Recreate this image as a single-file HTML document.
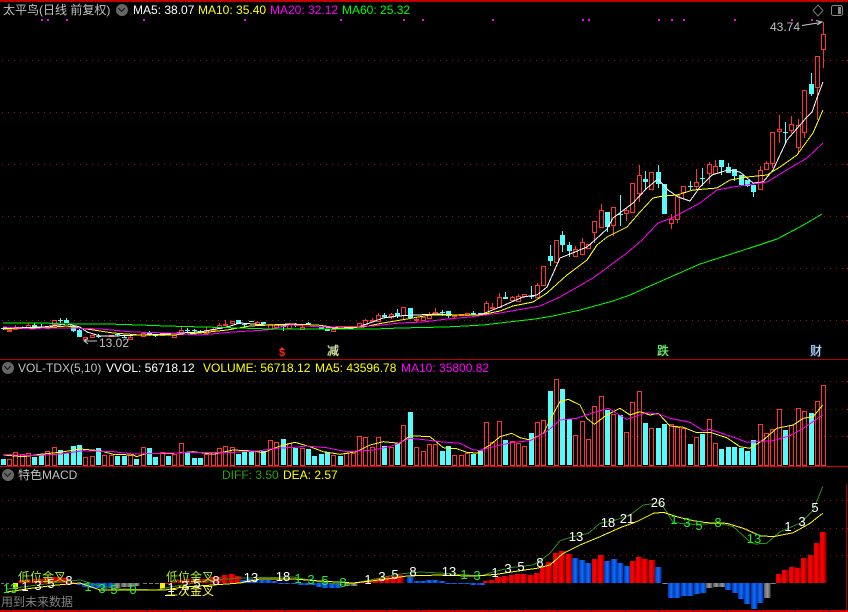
<!DOCTYPE html>
<html lang="zh">
<head>
<meta charset="utf-8">
<title>太平鸟</title>
<style>
html,body{margin:0;padding:0;background:#000;width:848px;height:612px;overflow:hidden}
#w{position:relative;width:848px;height:612px;background:#000;overflow:hidden;font-family:"Liberation Sans","WenQuanYi Zen Hei","Noto Sans CJK SC",sans-serif;font-size:12px;line-height:14px}
#w>svg{position:absolute;left:0;top:0}
.t{position:absolute;white-space:pre}
.ic{position:absolute;width:12px;height:12px;border-radius:50%;background:#666}
.ic:after{content:"";position:absolute;left:3px;top:2px;width:4px;height:4px;border-right:1.5px solid #111;border-bottom:1.5px solid #111;transform:rotate(45deg)}
.n{position:absolute;font-size:13px;line-height:14px;width:24px;text-align:center;color:#fff}
.g{color:#22f02a}
.c{position:absolute;font-size:12px;line-height:13px;white-space:pre}
</style>
</head>
<body>
<div id="w">
<svg id="s" width="848" height="612" viewBox="0 0 848 612" xmlns="http://www.w3.org/2000/svg"></svg>

<div class="t" style="left:3px;top:3px;color:#c0c0c0">太平鸟(日线 前复权)</div>
<div class="ic" style="left:116px;top:4px"></div>
<div class="t" style="left:133px;top:3px;color:#fff">MA5: 38.07</div>
<div class="t" style="left:198px;top:3px;color:#ff0">MA10: 35.40</div>
<div class="t" style="left:270px;top:3px;color:#f0f">MA20: 32.12</div>
<div class="t" style="left:342px;top:3px;color:#0f0">MA60: 25.32</div>
<div class="t" style="left:770px;top:20px;color:#c0c0c0">43.74</div>
<div class="t" style="left:99px;top:336px;color:#c0c0c0">13.02</div>

<div class="c" style="left:279px;top:347px;color:#f22;font-weight:bold;font-size:11px">$</div>
<div class="c" style="left:327px;top:345px;color:#dcf0a8;text-shadow:0 0 1px #dcf0a8">减</div>
<div class="c" style="left:657px;top:345px;color:#70f070;text-shadow:0 0 1px #70f070">跌</div>
<div class="c" style="left:810px;top:345px;color:#c0dcff;text-shadow:0 0 1px #80b0ff">财</div>

<div class="ic" style="left:2px;top:362px"></div>
<div class="t" style="left:18px;top:361px;color:#c0c0c0">VOL-TDX(5,10)</div>
<div class="t" style="left:106px;top:361px;color:#fff">VVOL: 56718.12</div>
<div class="t" style="left:203px;top:361px;color:#ff0">VOLUME: 56718.12</div>
<div class="t" style="left:315px;top:361px;color:#ff0">MA5: 43596.78</div>
<div class="t" style="left:401px;top:361px;color:#f0f">MA10: 35800.82</div>

<div class="ic" style="left:2px;top:469px"></div>
<div class="t" style="left:18px;top:468px;color:#c0c0c0">特色MACD</div>
<div class="t" style="left:222px;top:468px;color:#2ca010">DIFF: 3.50</div>
<div class="t" style="left:283px;top:468px;color:#ff0">DEA: 2.57</div>

<div class="c" style="left:18px;top:571px;color:#a8f020">低位金叉</div>
<div class="c" style="left:166px;top:571px;color:#a8f020">低位金叉</div>
<div class="c" style="left:166px;top:585px;color:#ffff40">上次金叉</div>
<div class="c" style="left:1px;top:596px;color:#808080">用到未来数据</div>

<div class="n g" style="left:-2px;top:582px">13</div>
<div class="n" style="left:13px;top:580px">1</div>
<div class="n" style="left:26px;top:579px">3</div>
<div class="n" style="left:39px;top:577px">5</div>
<div class="n" style="left:57px;top:574px">8</div>
<div class="n g" style="left:76px;top:580px">1</div>
<div class="n g" style="left:90px;top:582px">3</div>
<div class="n g" style="left:102px;top:583px">5</div>
<div class="n g" style="left:121px;top:583px">0</div>
<div class="n" style="left:159px;top:581px">1</div>
<div class="n" style="left:173px;top:579px">3</div>
<div class="n" style="left:185px;top:577px">5</div>
<div class="n" style="left:204px;top:574px">8</div>
<div class="n" style="left:239px;top:571px">13</div>
<div class="n" style="left:271px;top:570px">18</div>
<div class="n g" style="left:286px;top:572px">1</div>
<div class="n g" style="left:299px;top:573px">3</div>
<div class="n g" style="left:313px;top:574px">5</div>
<div class="n g" style="left:331px;top:576px">8</div>
<div class="n" style="left:356px;top:573px">1</div>
<div class="n" style="left:370px;top:570px">3</div>
<div class="n" style="left:383px;top:568px">5</div>
<div class="n" style="left:401px;top:565px">8</div>
<div class="n" style="left:437px;top:565px">13</div>
<div class="n g" style="left:452px;top:568px">1</div>
<div class="n g" style="left:465px;top:569px">3</div>
<div class="n" style="left:483px;top:566px">1</div>
<div class="n" style="left:496px;top:562px">3</div>
<div class="n" style="left:509px;top:560px">5</div>
<div class="n" style="left:528px;top:556px">8</div>
<div class="n" style="left:564px;top:530px">13</div>
<div class="n" style="left:596px;top:516px">18</div>
<div class="n" style="left:615px;top:512px">21</div>
<div class="n" style="left:646px;top:496px">26</div>
<div class="n g" style="left:662px;top:513px">1</div>
<div class="n g" style="left:675px;top:516px">3</div>
<div class="n g" style="left:687px;top:519px">5</div>
<div class="n g" style="left:706px;top:516px">8</div>
<div class="n g" style="left:742px;top:532px">13</div>
<div class="n" style="left:776px;top:520px">1</div>
<div class="n" style="left:790px;top:515px">3</div>
<div class="n" style="left:803px;top:501px">5</div>
</div>

<script>
var o='';
var R='#ff3232',C='#54fcfc';
function L(x1,y1,x2,y2,c,d){o+='<line x1="'+x1+'" y1="'+y1+'" x2="'+x2+'" y2="'+y2+'" stroke="'+c+'"'+(d?' stroke-dasharray="'+d+'"':'')+'/>';}
function rect(x,y,w,h,f,s){o+='<rect x="'+x+'" y="'+y+'" width="'+w+'" height="'+h+'" fill="'+f+'"'+(s?' stroke="'+s+'"':'')+'/>';}
function PL(p,c,w){o+='<polyline fill="none" stroke="'+c+'" stroke-width="'+(w||1)+'" points="'+p+'"/>';}
function conv(a,x0,y0){var r=[];for(var i=0;i<a.length;i+=2){r.push((x0+a[i]/3).toFixed(1)+','+(y0+a[i+1]/3).toFixed(1));}return r.join(' ');}

o+='<defs>'+
'<linearGradient id="gr"><stop offset="0" stop-color="#e00000"/><stop offset=".45" stop-color="#ff0000"/><stop offset="1" stop-color="#800000"/></linearGradient>'+
'<linearGradient id="gb"><stop offset="0" stop-color="#0038b0"/><stop offset=".5" stop-color="#1070ff"/><stop offset="1" stop-color="#0030a0"/></linearGradient>'+
'<linearGradient id="gg"><stop offset="0" stop-color="#555"/><stop offset=".5" stop-color="#999"/><stop offset="1" stop-color="#555"/></linearGradient>'+
'</defs><g shape-rendering="crispEdges">';

/* frame */
rect(0,0,848,2,'#c00000');
rect(0,359,848,1,'#b00000');
rect(0,466,848,1,'#d00000');
rect(0,610,848,2,'#d00000');
rect(846,484,1,126,'#a00000');
[60,112,164,216,268,320,381,409,436,500,528,555].forEach(function(y){
  L(2,y+.5,846,y+.5,'#a01010','1 5');
  rect(846,y,2,1,'#c00000');
});
for(var tx=11;tx<846;tx+=34.1){rect(Math.round(tx),610,1,2,'#333');}

/* magenta markers */
[41,47,66,143,244,340,403,422,492,582,588,658,671,683,734,791,811].forEach(function(x){rect(x,19,2,2,'#ff00ff');});

/* volume */
function vol(a,x0,y0){
  for(var i=0;i<a.length;i+=3){
    var x=Math.round(x0+a[i]/3-2.5),c=a[i+1],t=Math.round(y0+a[i+2]/3);
    if(c){rect(x,t,5,465-t,C);}else{rect(x+.5,t+.5,4,465-t,'none',R);}
  }
}
vol([10,1,177,28,0,178,46,0,157,67,0,163,85,0,160,103,1,171,124,1,165,142,0,153,163,0,142,181,1,150,199,1,158,220,1,138,238,1,135,256,0,172,277,0,168,295,1,144,313,0,165,334,0,165,352,1,167,373,1,167,391,0,165,409,1,177,430,0,142,448,1,144,466,1,171,487,0,155,505,1,167,523,0,162,544,0,130,562,1,157,583,1,174,601,1,174,619,0,162,640,0,157,658,0,145,676,0,138,697,0,142,715,1,162,733,1,156,754,1,153,772,0,153,790,1,153,811,0,121,829,0,127,850,1,117,868,0,130,886,1,143],0,400);
vol([37,0,145,55,1,147,73,1,168,94,1,162,112,1,157,130,0,165,151,1,168,169,0,160,190,0,160,208,0,109,226,0,112,247,0,142,265,0,112,283,1,138,304,0,142,322,1,130,340,0,76,361,1,36,379,0,142,400,0,154,418,0,133,436,0,133,457,1,153,475,1,138,493,0,166,514,0,166,532,0,160,550,1,162,571,1,153],290,400);
vol([19,0,157,37,0,217,58,0,154,76,1,210,97,0,214,115,0,219,133,0,229,154,1,189,172,0,157,190,0,151,211,1,63,229,0,28,247,1,57,268,1,147,286,0,196,307,0,154,325,0,208,343,0,109,364,0,79,382,1,120,400,0,133,421,1,135,439,0,187,457,0,97,478,0,64,496,1,159,514,0,175,535,1,174,553,1,162,574,0,163,592,0,172,610,0,175,631,1,222,649,0,202,667,1,193,688,0,148,706,0,220,724,1,237,745,1,231,763,1,231,784,1,233,802,1,243,820,1,211,841,0,163,859,0,190,877,0,178,898,0,118,916,1,180,934,0,166,955,0,115,973,0,124,994,1,129,1012,0,94,1030,0,46],480,370);
rect(480,451,3,14,C);

/* volume MAs */
PL(conv([10,165,70,170,120,163,180,157,240,147,300,152,340,163,400,165,410,170,440,160,520,160,580,155,640,163,700,150,760,153,790,158,840,138,880,128],0,400)+' '+
 conv([15,127,60,140,100,155,150,163,200,155,240,135,280,125,330,130,360,107,420,110,460,143,500,146,530,157,570,160],290,400)+' '+
 conv([0,243,30,225,60,200,95,190,120,203,150,210,190,190,215,140,240,95,265,88,300,105,320,145,343,163,380,135,420,115,450,135,480,125,510,135,535,130,570,168,610,172,650,188,690,187,740,203,780,230,810,235,850,210,890,175,940,165,970,145,1000,140,1028,105],480,370),'#ffff00');
PL(conv([10,163,100,167,180,162,250,152,340,155,400,162,600,157,700,157,780,152,830,145,880,142],0,400)+' '+
 conv([15,142,50,138,110,143,170,155,210,153,250,150,300,140,360,115,410,120,450,125,510,130,550,150,580,152],290,400)+' '+
 conv([0,240,50,228,100,217,150,212,200,185,240,150,290,145,340,128,385,115,440,148,500,128,540,133,570,145,630,157,670,182,690,178,770,205,800,217,880,212,930,197,970,175,1028,135],480,370),'#ff00ff');

/* candles: x,cyan,high,top,bottom,low in zoom coords */
function cand(a,x0,y0){
 for(var i=0;i<a.length;i+=6){
  var x=Math.round(x0+a[i]/3),c=a[i+1],h=Math.round(y0+a[i+2]/3),t=Math.round(y0+a[i+3]/3),b=Math.round(y0+a[i+4]/3),l=Math.round(y0+a[i+5]/3);
  if(b<=t)b=t+1;
  if(c){L(x+.5,h,x+.5,l,C);rect(x-2,t,5,b-t,C);}
  else{
   if(h<t)L(x+.5,h,x+.5,t,R);
   if(l>b)L(x+.5,b,x+.5,l,R);
   rect(x-1.5,t+.5,4,Math.max(b-t,1),'none',R);
  }
 }
}
cand([10,1,80,85,87,90, 26,0,90,90,94,94, 46,0,75,83,87,90, 67,0,78,82,84,88, 85,0,70,75,82,84, 103,1,70,75,83,85, 124,1,73,80,81,85, 142,0,78,80,85,85, 163,0,61,61,72,72, 181,1,54,60,61,68, 199,1,54,61,70,70, 220,1,78,78,92,95, 238,1,88,90,110,112, 256,0,112,112,117,125, 277,0,104,106,111,115, 295,1,102,107,108,114, 334,0,104,106,108,110, 352,1,100,102,106,108, 373,1,108,110,113,115, 391,0,108,110,116,116, 430,0,96,100,108,112, 448,1,92,98,106,108, 466,1,102,106,108,110, 487,0,98,100,104,104, 505,1,100,102,104,106, 523,0,106,106,112,114, 544,0,78,90,102,102, 562,1,83,90,91,97, 583,1,86,90,93,96, 601,1,90,93,94,99, 619,0,82,90,98,98, 640,0,82,87,88,90, 658,0,70,75,83,83, 676,0,60,72,73,78, 697,0,63,63,70,70, 715,1,61,61,73,73, 733,1,68,72,73,80, 754,1,63,63,67,67, 772,0,62,66,72,72, 790,1,66,66,72,72, 811,0,72,72,86,86, 829,0,72,72,80,80, 850,1,75,78,79,92, 868,0,70,72,85,88, 886,1,68,73,74,82],0,300);
cand([37,0,108,110,117,117, 55,1,96,100,101,106, 94,1,110,112,118,118, 112,1,116,118,122,122, 130,0,118,118,122,122, 169,1,110,112,116,118, 208,0,99,99,108,108, 226,0,88,90,102,102, 247,0,85,91,93,96, 265,0,68,76,94,94, 283,1,70,76,80,85, 304,0,70,72,82,88, 322,1,57,70,78,85, 340,0,52,52,75,90, 361,1,54,54,84,84, 379,0,83,88,90,96, 400,0,80,80,90,90, 418,0,65,75,83,83, 436,0,54,65,72,75, 457,1,60,65,66,78, 475,1,64,64,78,84, 493,0,76,76,77,84, 514,0,72,73,75,75, 532,0,68,70,76,76, 550,1,64,70,75,75, 571,1,68,70,75,75],290,290);
cand([18,0,364,370,400,405, 37,0,370,380,382,382, 58,0,340,352,380,380, 76,1,337,351,356,356, 97,0,347,352,360,362, 115,0,342,347,362,367, 133,0,341,341,347,347, 154,1,319,347,349,357, 172,0,310,316,350,352, 190,0,259,259,316,316, 211,1,195,228,243,258, 229,0,181,181,245,245, 247,1,153,165,194,216, 268,1,185,196,213,232, 286,0,198,207,227,227, 307,0,174,187,221,221, 325,0,193,193,205,206, 343,0,124,124,157,188, 364,0,72,91,140,140, 382,1,97,97,140,155, 400,0,82,82,134,168],480,180);
cand([4,0,282,300,350,350, 22,1,306,306,350,350, 40,0,292,292,345,375, 61,1,255,313,316,348, 79,0,295,301,309,332, 97,0,220,220,307,307, 118,0,165,196,250,275, 136,1,183,207,216,237, 154,0,187,187,236,236, 175,1,165,186,222,233, 193,1,222,222,312,312, 214,0,313,328,338,357, 232,0,255,255,328,339, 250,0,228,228,245,268, 271,1,213,227,230,240, 289,0,178,217,227,237, 307,1,175,203,206,228, 328,0,157,163,188,222, 346,0,150,169,188,188, 364,1,150,150,170,195, 385,1,158,172,190,190, 403,1,178,178,198,212, 424,1,195,195,225,225, 442,1,210,210,228,231, 460,1,225,225,246,260, 481,0,168,180,236,239, 499,0,153,160,178,178, 517,0,67,67,158,175, 538,0,14,58,62,100, 556,1,35,66,68,100, 574,0,18,43,60,70, 595,0,27,45,112,133],600,110);
cand([1141,0,271,271,395,414, 1162,1,219,252,282,287, 1180,0,169,169,260,360, 1198,0,66,103,146,203],424,0);

/* main MAs */
PL('3,328 43,327 67,324 80,327 87,332 100,336 113,336 140,335 167,334 180,333 200,332 227,327 240,323 267,325 290,325 307,326 323,327 347,329 357,327 370,323 383,318 397,316 417,315 437,314 457,315 480,315 500,307 523,297 537,295 547,287 560,258 570,254 587,247 595,240 607,229 613,218 633,203 647,188 658,179 668,190 678,197 690,201 700,187 712,175 728,170 740,172 753,183 763,182 773,170 787,140 800,125 806,118 812,112 817,98 823,82','#ffffff');
PL('3,329 40,328 67,326 100,331 113,333 140,335 173,335 200,333 227,330 250,326 290,324 317,325 340,328 363,327 383,323 407,319 430,315 457,315 480,315 500,311 513,306 533,302 547,293 567,275 587,260 597,245 607,237 627,227 640,212 653,198 663,196 677,195 693,190 717,188 730,180 747,177 767,175 780,167 797,155 813,133 823,110','#ffff00');
PL('3,327 33,329 43,328 73,328 100,329 133,332 167,333 200,335 233,332 267,330 290,325 323,327 373,326 400,323 423,322 447,319 470,317 500,313 523,309 540,306 560,297 593,278 627,253 642,240 658,223 672,218 687,210 700,203 717,190 733,187 753,184 767,182 790,168 807,158 823,143','#ff00ff');
PL('3,323 45,323 63,324 108,324 140,325 166,326 203,327 240,328 270,329 375,329 400,328 445,327 465,326 483,325 500,323 535,319 553,316 580,310 613,301 630,295 650,286 675,275 700,264 725,256 750,248 777,239 800,227 812,220 822,214','#00ff00');

/* MACD bars */
function mbar(x,t,g){var y=Math.min(t,583),h=Math.abs(t-583)||1;rect(Math.round(x-3),Math.round(y),6.4,Math.max(Math.round(h),1),'url(#'+g+')');}
[[67,120],[85,120],[105,118],[124,118],[142,115],[163,112],[181,110],[199,115],[220,125]].forEach(function(b){mbar(b[0]/3,540+b[1]/3,'gr');});
[[238,135],[256,140],[277,143],[295,145],[313,146],[334,145]].forEach(function(b){mbar(b[0]/3,540+b[1]/3,'gb');});
[[352,143],[373,142],[391,140],[409,138]].forEach(function(b){mbar(b[0]/3,540+b[1]/3,'gg');});
[[505,128],[523,125],[544,120],[562,118],[583,118],[601,118],[619,116],[640,112],[658,110],[676,104],[697,102],[715,108]].forEach(function(b){mbar(b[0]/3,540+b[1]/3,'gr');});
[[10,120],[28,118],[46,120],[67,120],[85,120],[103,123]].forEach(function(b){mbar(240+b[0]/3,540+b[1]/3,'gb');});
[[124,131],[142,132],[163,133],[182,134],[201,135],[220,136],[238,140],[256,143],[275,143],[294,143]].forEach(function(b){mbar(240+b[0]/3,540+b[1]/3,'gb');});
[[322,137],[341,137]].forEach(function(b){mbar(240+b[0]/3,540+b[1]/3,'gg');});
[[370,125],[388,123],[407,118],[425,114],[445,110],[463,107],[481,106]].forEach(function(b){mbar(240+b[0]/3,540+b[1]/3,'gr');});
[[510,110],[530,122],[548,123],[567,120],[586,120],[605,123],[624,132],[643,132],[662,133],[681,133],[700,134],[719,135]].forEach(function(b){mbar(240+b[0]/3,540+b[1]/3,'gb');});
[[740,123],[760,120],[775,112]].forEach(function(b){mbar(240+b[0]/3,540+b[1]/3,'gr');});
mbar(481.5,585,'gb');
[[17,273,'gr'],[36,270,'gr'],[56,262,'gr'],[75,258,'gr'],[96,255,'gr'],[115,252,'gr'],[133,252,'gr'],[153,255,'gr'],[171,250,'gr'],[190,230,'gr'],[208,216,'gr'],[228,189,'gr'],[247,183,'gr'],[267,191,'gr'],[286,204,'gb'],[306,210,'gb'],[325,219,'gb'],[344,207,'gr'],[363,195,'gr'],[382,213,'gb'],[401,207,'gb'],[421,219,'gb'],[440,228,'gb'],[458,213,'gr'],[477,201,'gr'],[496,207,'gr'],[515,210,'gr'],[535,231,'gb'],[554,281,'gg'],[573,323,'gb'],[592,323,'gb'],[611,317,'gb'],[630,317,'gb'],[650,311,'gb'],[669,308,'gb'],[688,293,'gg'],[707,290,'gg'],[726,290,'gg'],[745,299,'gb'],[764,308,'gb'],[783,326,'gb'],[802,341,'gb'],[821,356,'gb'],[840,338,'gb'],[860,323,'gg'],[878,281,'gg'],[897,252,'gr'],[916,240,'gr'],[935,231,'gr'],[954,234,'gr'],[973,204,'gr'],[993,195,'gr'],[1011,159,'gr'],[1030,126,'gr']].forEach(function(b){mbar(480+b[0]/3,490+b[1]/3,b[2]);});
L(1,583.5,10,583.5,'#777','3 2');L(143,583.5,159,583.5,'#777','4 2');
rect(13,583,5,6,'#ffee00');rect(160,583,5,6,'#ffee00');
rect(165,595,10,1,'#fff');

/* MACD lines */
PL('7,589 60,582 80,580 100,586 120,589 157,590 170,587 213,580 240,578 293,577 320,582 345,585 370,580 400,574 420,572 440,573 467,575 '+conv([0,258,50,243,100,232,160,225,190,205,210,190,240,152,280,140,325,130,360,100,400,92,450,75,490,45,540,38,560,65,580,98,640,103,720,100,760,110,810,155,825,162,860,160,900,125,960,100,1000,60,1028,-10],480,490),'#2a8a1a');
PL('7,592 33,588 57,585 80,583 100,590 157,590 165,590 183,587 213,585 240,583 260,579 293,579 320,581 353,583 380,580 407,576 440,575 467,576 '+conv([0,257,50,253,100,245,170,235,210,225,250,190,300,165,360,140,420,113,470,95,520,70,550,67,590,80,640,92,680,98,740,100,790,115,840,137,880,140,940,128,990,100,1028,70],480,490),'#ffff00');
o+='</g>';

/* top right icons and price arrows */
o+='<path d="M818 5L823 10.5L818 16L813 10.5Z" fill="none" stroke="#777"/>';
o+='<rect x="831.5" y="5.5" width="11" height="10" rx="2" fill="none" stroke="#888"/><rect x="838" y="7" width="3" height="7" fill="#888"/>';
o+='<path d="M802 25.5L821 22.5M816 20.5L822 22L817 25" fill="none" stroke="#c8c8c8"/>';
o+='<path d="M97 341H84M88 338L84 341L88 344" fill="none" stroke="#c8c8c8"/>';
o+='<path d="M282 347L285 350H279Z" fill="#f22"/>';
document.getElementById('s').innerHTML=o;
</script>
</body>
</html>
